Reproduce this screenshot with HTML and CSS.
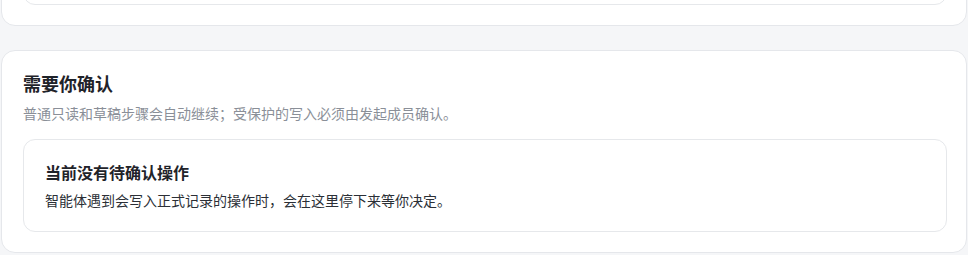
FILE: index.html
```html
<!DOCTYPE html>
<html lang="zh-CN">
<head>
    <meta charset="UTF-8">
    <meta name="viewport" content="width=device-width, initial-scale=1.0">
    <title>需要你确认</title>
    <link rel="stylesheet" href="styles.css">
</head>
<body>
    <div class="page">
        <!-- previous panel, scrolled mostly out of view -->
        <section class="panel panel-prev">
            <div class="sub-card"></div>
        </section>

        <section class="panel">
            <h2 class="panel-title">需要你确认</h2>
            <p class="panel-desc">普通只读和草稿步骤会自动继续；受保护的写入必须由发起成员确认。</p>
            <div class="sub-card empty-state">
                <h3 class="empty-title">当前没有待确认操作</h3>
                <p class="empty-desc">智能体遇到会写入正式记录的操作时，会在这里停下来等你决定。</p>
            </div>
        </section>
    </div>
</body>
</html>
```

FILE: styles.css
```css
body {
    margin: 0;
    background-color: #f5f6f8;
    font-family: Inter, "Noto Sans CJK SC", "Noto Sans", sans-serif;
    color: #1f2329;
    overflow: hidden;
}
.page {
    display: flex;
    flex-direction: column;
    gap: 24px;
    padding: 0 1px 0 1px;
    margin-top: -60px; /* page is scrolled */
}
.panel {
    background-color: #fff;
    border: 1px solid #e5e7eb;
    border-radius: 14px;
    padding: 20px 19px 20px 21px;
}
.panel-prev {
    height: 44px;
}
.panel-prev .sub-card {
    height: 42px;
}
.panel-title {
    margin: 1px 0 0;
    font-size: 18px;
    font-weight: 700;
    line-height: 26px;
}
.panel-desc {
    margin: 5px 0 14px;
    font-size: 14px;
    line-height: 22px;
    color: #8a8f98;
}
.sub-card {
    border: 1px solid #e6e8eb;
    border-radius: 12px;
    background-color: #fff;
}
.empty-state {
    padding: 21px 21px 19px;
}
.empty-title {
    margin: 0;
    font-size: 16px;
    font-weight: 700;
    line-height: 24px;
}
.empty-desc {
    margin: 5px 0 0;
    font-size: 14px;
    line-height: 22px;
    color: #2b2f36;
}
```
